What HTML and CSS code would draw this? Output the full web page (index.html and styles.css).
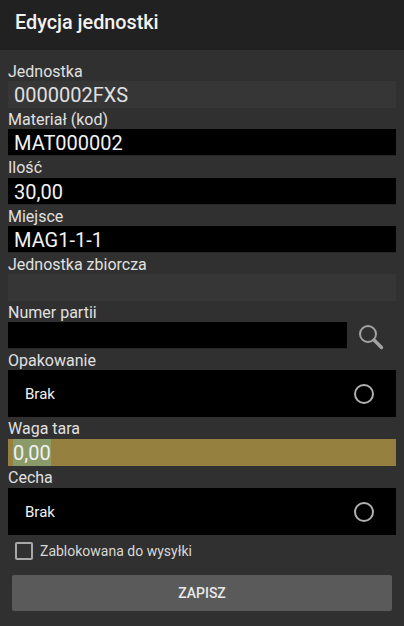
FILE: index.html
```html
<!DOCTYPE html>
<html lang="pl">
<head>
    <meta charset="UTF-8">
    <title>Edycja jednostki</title>
    <link rel="stylesheet" href="styles.css">
</head>
<body>
    <div class="app">
        <div class="title-bar">Edycja jednostki</div>
        <div class="form">
            <div class="form-item">
                <label>Jednostka</label>
                <div class="field disabled">0000002FXS</div>
            </div>
            <div class="form-item">
                <label>Materiał (kod)</label>
                <div class="field">MAT000002</div>
            </div>
            <div class="form-item">
                <label>Ilość</label>
                <div class="field">30,00</div>
            </div>
            <div class="form-item">
                <label>Miejsce</label>
                <div class="field">MAG1-1-1</div>
            </div>
            <div class="form-item">
                <label>Jednostka zbiorcza</label>
                <div class="field disabled"></div>
            </div>
            <div class="form-item">
                <label>Numer partii</label>
                <div class="field-row">
                    <div class="field"></div>
                    <svg class="search-icon" width="27" height="27" viewBox="0 0 27 27">
                        <circle cx="10" cy="10" r="8" fill="none" stroke="#a3a3a3" stroke-width="2"/>
                        <path d="M16 16 L23.5 23.5" fill="none" stroke="#a3a3a3" stroke-width="3.4" stroke-linecap="round"/>
                    </svg>
                </div>
            </div>
            <div class="form-item">
                <label>Opakowanie</label>
                <div class="select">
                    <span>Brak</span>
                    <span class="radio"></span>
                </div>
            </div>
            <div class="form-item">
                <label class="tall">Waga tara</label>
                <div class="field focused"><span class="selected">0,00</span></div>
            </div>
            <div class="form-item">
                <label class="tall">Cecha</label>
                <div class="select">
                    <span>Brak</span>
                    <span class="radio"></span>
                </div>
            </div>
            <div class="check-row">
                <span class="checkbox"></span>
                <span>Zablokowana do wysyłki</span>
            </div>
            <button class="save-btn">ZAPISZ</button>
        </div>
    </div>
</body>
</html>
```

FILE: styles.css
```css
* {
    margin: 0;
    padding: 0;
    box-sizing: border-box;
}
body {
    font-family: Roboto, Arial, sans-serif;
    background-color: #303030;
    color: #f2f2f2;
}
.app {
    width: 404px;
    height: 626px;
    overflow: hidden;
}
.title-bar {
    height: 50px;
    padding-left: 15px;
    line-height: 46px;
    font-size: 19.8px;
    font-weight: 500;
    background-color: #212121;
}
.form {
    padding: 10px 8px 0;
}
.form-item {
    display: flex;
    flex-direction: column;
}
label {
    height: 21.2px;
    line-height: 23px;
    font-size: 16px;
    color: #e0e0e0;
}
label.tall {
    height: 22px;
}
.field {
    height: 27px;
    padding-left: 6px;
    line-height: 28px;
    font-size: 20px;
    background-color: #000;
    border: solid #262626;
    border-width: 0 0 1px 0;
}
.field.disabled {
    background-color: #363636;
    border: none;
    color: #e0e0e0;
}
.field.focused {
    background-color: #96803f;
    border: none;
    padding-left: 5px;
}
.selected {
    display: inline-block;
    height: 27px;
    background-color: #8a9a68;
}
.field-row {
    display: flex;
    height: 27px;
}
.field-row .field {
    width: 339px;
}
.search-icon {
    margin: 2px 0 0 11px;
    overflow: visible;
}
.select {
    height: 47px;
    padding: 0 22px 0 17px;
    display: flex;
    align-items: center;
    justify-content: space-between;
    font-size: 15px;
    background-color: #000;
}
.radio {
    width: 20px;
    height: 20px;
    border: 2px solid #b0b0b0;
    border-radius: 50%;
}
.check-row {
    display: flex;
    align-items: center;
    gap: 7px;
    height: 32px;
    padding-left: 7px;
    font-size: 14px;
    color: #d8d8d8;
}
.checkbox {
    width: 18px;
    height: 18px;
    border: 2px solid #a8a8a8;
    border-radius: 2px;
}
.save-btn {
    display: block;
    width: 380px;
    height: 36px;
    margin: 8px 0 0 4px;
    font-family: Roboto, Arial, sans-serif;
    font-size: 14px;
    font-weight: 500;
    color: #e8e8e8;
    background-color: #5a5a5a;
    border: none;
    border-radius: 2px;
}
```
